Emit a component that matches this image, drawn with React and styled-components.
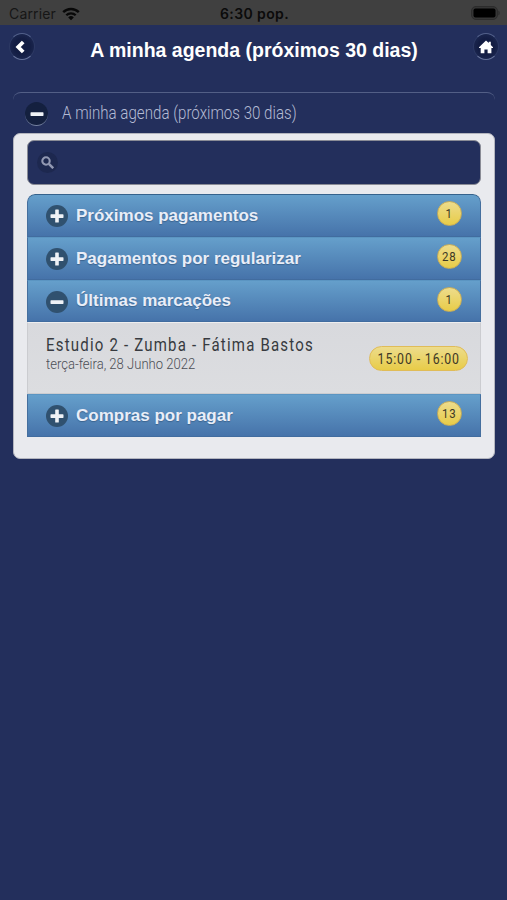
import styled, { createGlobalStyle } from "styled-components";

const GlobalStyle = createGlobalStyle`
  body {
    margin: 0;
    background-color: #232f5c;
    font-family: "Liberation Sans", Arial, sans-serif;
  }
`;

const Screen = styled.div`
  box-sizing: border-box;
  width: 507px;
  height: 900px;
  overflow: hidden;
  background-color: #232f5c;
`;

const StatusBar = styled.div`
  display: grid;
  grid-template-columns: 1fr auto 1fr;
  align-items: center;
  height: 25px;
  box-sizing: border-box;
  padding: 2px 7px 0 9px;
  background-color: #404040;
  color: #0b0b0b;
  font-family: Inter, "Liberation Sans", sans-serif;
  font-size: 14px;
  line-height: 20px;
`;
const Carrier = styled.div`
  display: flex;
  align-items: center;
  gap: 6px;
  color: #161616;
  letter-spacing: 0.15px;
`;
const Clock = styled.div`
  font-weight: 600;
  letter-spacing: 0.4px;
`;
const Battery = styled.svg`
  justify-self: end;
`;

const Header = styled.header`
  display: flex;
  align-items: flex-start;
  justify-content: space-between;
  height: 67px;
  box-sizing: border-box;
  padding: 8px 8px 0 9px;
`;
const RoundButton = styled.button`
  display: flex;
  align-items: center;
  justify-content: center;
  width: 26px;
  height: 27px;
  box-sizing: border-box;
  padding: 0;
  border: 1px solid #52608a;
  border-left-color: #2c3963;
  border-right-color: #2c3963;
  border-bottom-color: #66739a;
  border-radius: 50%;
  background: radial-gradient(circle, #131d43 45%, #1b264f 75%);
  cursor: pointer;
`;
const PageTitle = styled.h1`
  margin: 5px 0 0;
  color: #ffffff;
  font-size: 19.5px;
  line-height: 24px;
  font-weight: bold;
  white-space: nowrap;
`;

const Main = styled.main`
  padding: 0 12px 0 13px;
`;
const SectionHeader = styled.div`
  display: flex;
  align-items: flex-start;
  height: 41px;
  box-sizing: border-box;
  padding: 9px 0 0 12px;
  border-top: 1px solid #535f86;
  border-radius: 8px 8px 0 0;
`;
const SectionIcon = styled.div`
  display: flex;
  align-items: center;
  justify-content: center;
  width: 23px;
  height: 24px;
  box-sizing: border-box;
  margin-right: 14px;
  border-bottom: 1px solid #7581a0;
  border-radius: 50%;
  background-color: #14203f;
`;
const Condensed = styled.span`
  display: inline-block;
  font-family: Roboto, "Liberation Sans", sans-serif;
  transform: scaleX(${(props) => props.$scale});
  transform-origin: ${(props) => props.$origin || "left"};
  white-space: nowrap;
`;
const SectionTitle = styled.h2`
  margin: 0;
  color: #b4bbd4;
  font-size: 18px;
  line-height: 22px;
  font-weight: 300;
`;

const Panel = styled.section`
  height: 326px;
  box-sizing: border-box;
  padding: 6px 13px 0;
  border: 1px solid #b3b5be;
  border-radius: 7px;
  background-color: #e9eaee;
`;
const SearchBox = styled.div`
  display: flex;
  align-items: center;
  height: 45px;
  box-sizing: border-box;
  margin-bottom: 9px;
  padding: 0 0 0 9px;
  border: 1px solid #8a8c96;
  border-radius: 7px;
  background-color: #232f5c;
`;
const SearchIcon = styled.div`
  display: flex;
  align-items: center;
  justify-content: center;
  width: 21px;
  height: 21px;
  border-radius: 50%;
  background-color: #1d284f;
`;

const List = styled.ul`
  margin: 0;
  padding: 0;
  list-style: none;
  overflow: hidden;
  border-radius: 8px 8px 0 0;
`;
const Row = styled.li`
  display: flex;
  align-items: center;
  height: ${(props) => props.$height}px;
  box-sizing: border-box;
  padding: 1px 18px 0 18px;
  border: 1px solid #456f9e;
  border-top-color: ${(props) => (props.$first ? "#35628c" : "#5b95c2")};
  border-bottom-color: #416c9f;
  border-radius: ${(props) => (props.$first ? "8px 8px 0 0" : "0")};
  background: linear-gradient(#659fcb, #4673aa);
`;
const ToggleIcon = styled.div`
  display: flex;
  align-items: center;
  justify-content: center;
  width: 22px;
  height: 22px;
  margin: 0 8px 0 0;
  border-radius: 50%;
  background-color: #30516f;
`;
const RowTitle = styled.h3`
  flex: 1;
  margin: -1px 0 0;
  color: #e9eef8;
  font-size: 17px;
  line-height: 22px;
  font-weight: bold;
  text-shadow: 0 1px 1px #3b648f;
`;
const Badge = styled.span`
  display: flex;
  align-items: center;
  justify-content: center;
  width: ${(props) => props.$width || 25}px;
  height: 25px;
  box-sizing: border-box;
  margin-top: ${(props) => props.$offset || 0}px;
  border: 1px solid ${(props) => (props.$wide ? "#e0bc58" : "#c8ad58")};
  border-radius: 13px;
  background: linear-gradient(#eddc8c, #e8cc48);
  color: #3d3826;
  font-size: ${(props) => (props.$wide ? 14 : 13)}px;
  letter-spacing: 1px;
`;

const Booking = styled.li`
  display: flex;
  justify-content: space-between;
  height: 72px;
  box-sizing: border-box;
  padding: 12px 12px 0 18px;
  border: 1px solid #cbccd0;
  border-top-color: #eeeeef;
  background: linear-gradient(#d8d9dd, #dcdde0);
`;
const BookingInfo = styled.div`
  display: flex;
  flex-direction: column;
  width: 280px;
`;
const BookingName = styled.div`
  height: 19px;
  color: #373a40;
  font-size: 17.5px;
  line-height: 21px;
  letter-spacing: 1.4px;
`;
const BookingDate = styled.div`
  color: #4b4e55;
  font-size: 15px;
  line-height: 20px;
  font-weight: 300;
`;

const WifiIcon = () => (
  <svg width="18" height="14" viewBox="0 0 18 14" fill="none" stroke="#080808">
    <path d="M1.2 5.2a11 11 0 0 1 15.6 0" strokeWidth="2.4" />
    <path d="M4.3 8.3a6.7 6.7 0 0 1 9.4 0" strokeWidth="2.3" />
    <path d="M9 13.2L6.2 10.4a4 4 0 0 1 5.6 0z" fill="#080808" stroke="none" />
  </svg>
);

const SignIcon = ({ plus, size = 14 }) => (
  <svg width={size} height={size} viewBox="0 0 14 14" fill="#eff2f6">
    <rect x="0.5" y="5.3" width="13" height="3.6" rx="0.6" />
    {plus && <rect x="5.2" y="0.5" width="3.6" height="13" rx="0.6" />}
  </svg>
);

const rows = [
  { title: "Próximos pagamentos", count: "1", height: 43 },
  { title: "Pagamentos por regularizar", count: "28", height: 43 },
  { title: "Últimas marcações", count: "1", height: 42, open: true },
  { title: "Compras por pagar", count: "13", height: 43 },
];

const AgendaRow = ({ row, first }) => (
  <Row $height={row.height} $first={first}>
    <ToggleIcon>
      <SignIcon plus={!row.open} />
    </ToggleIcon>
    <RowTitle>{row.title}</RowTitle>
    <Badge $offset={-5}>
      <Condensed $scale={0.88} $origin="center">
        {row.count}
      </Condensed>
    </Badge>
  </Row>
);

const App = () => {
  return (
    <Screen>
      <GlobalStyle />
      <StatusBar>
        <Carrier>
          Carrier
          <WifiIcon />
        </Carrier>
        <Clock>6:30 pop.</Clock>
        <Battery width="30" height="15" viewBox="0 0 30 15">
          <rect x="1.5" y="0.5" width="26" height="13" rx="4.5" fill="#353535" stroke="#2c2c2c" />
          <rect x="3.5" y="2.5" width="22" height="9" rx="2" fill="#000" />
          <path d="M28.4 4.5a3 3 0 0 1 0 5z" fill="#2b2b2b" />
        </Battery>
      </StatusBar>
      <Header>
        <RoundButton aria-label="Voltar">
          <svg width="14" height="14" viewBox="0 0 14 14" fill="none">
            <path d="M8.2 2L3.2 7L8.2 12" stroke="#fff" strokeWidth="3.8" />
          </svg>
        </RoundButton>
        <PageTitle>A minha agenda (próximos 30 dias)</PageTitle>
        <RoundButton aria-label="Início">
          <svg width="14" height="14" viewBox="0 0 14 14" fill="#fff">
            <path d="M7 .4L9.8 3V1.8h2v3.1L14 7.3v.7h-1.6v5.2H8.6V9.4H5.4v3.8H1.7V8H0v-.7z" />
          </svg>
        </RoundButton>
      </Header>
      <Main>
        <SectionHeader>
          <SectionIcon>
            <SignIcon />
          </SectionIcon>
          <SectionTitle>
            <Condensed $scale={0.84}>A minha agenda (próximos 30 dias)</Condensed>
          </SectionTitle>
        </SectionHeader>
        <Panel>
          <SearchBox>
            <SearchIcon>
              <svg width="13" height="13" viewBox="0 0 13 13" fill="none" stroke="#9299b3">
                <circle cx="5" cy="5" r="3.7" strokeWidth="2.1" />
                <path d="M7.9 7.9L12.2 12.2" strokeWidth="2.5" />
              </svg>
            </SearchIcon>
          </SearchBox>
          <List>
            {rows.slice(0, 3).map((row, index) => (
              <AgendaRow key={row.title} row={row} first={index === 0} />
            ))}
            <Booking>
              <BookingInfo>
                <BookingName>
                  <Condensed $scale={0.857}>Estudio 2 - Zumba - Fátima Bastos</Condensed>
                </BookingName>
                <BookingDate>
                  <Condensed $scale={0.87}>terça-feira, 28 Junho 2022</Condensed>
                </BookingDate>
              </BookingInfo>
              <Badge $wide $width={99} $offset={11}>
                <Condensed $scale={0.88} $origin="center">
                  15:00 - 16:00
                </Condensed>
              </Badge>
            </Booking>
            <AgendaRow row={rows[3]} />
          </List>
        </Panel>
      </Main>
    </Screen>
  );
};

export default App;
